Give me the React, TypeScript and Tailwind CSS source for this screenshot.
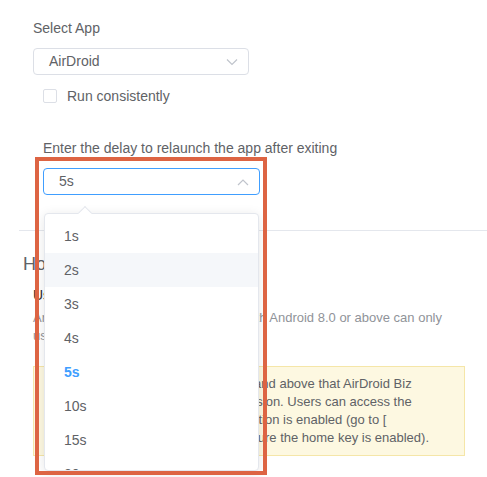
import React from "react";

const font = { fontFamily: '"Liberation Sans", Arial, sans-serif' };

const options = ["1s", "2s", "3s", "4s", "5s", "10s", "15s", "20s", "30s"];

function Chevron({ up }: { up?: boolean }) {
  return (
    <svg width="12" height="8" viewBox="0 0 12 8" className="text-[#c0c4cc]">
      <path
        d={up ? "M1 7 L6 2 L11 7" : "M1 1.5 L6 6.5 L11 1.5"}
        fill="none"
        stroke="currentColor"
        strokeWidth="1.2"
      />
    </svg>
  );
}

export default function App() {
  return (
    <div className="relative w-[487px] h-[477px] overflow-hidden bg-white text-[#606266]" style={font}>
      {/* form */}
      <div className="pl-[33px] pt-[19px]">
        <div className="text-[14px] leading-[18px]">Select App</div>
        <div className="mt-[11px] w-[216px] h-[27px] border border-[#dcdfe6] rounded-[4px] flex items-center justify-between pl-[15px] pr-[10px]">
          <span className="text-[14px]">AirDroid</span>
          <Chevron />
        </div>
        <div className="mt-[14px] ml-[10px] flex items-center gap-[10px]">
          <span className="w-[14px] h-[14px] border border-[#dcdfe6] rounded-[2px] bg-white" />
          <span className="text-[14px] leading-[14px]">Run consistently</span>
        </div>
      </div>

      <div className="pl-[43px] mt-[36px]">
        <div className="text-[14px] leading-[18px]">Enter the delay to relaunch the app after exiting</div>
        <div className="relative mt-[11px] w-[217px]">
          <div className="h-[27px] border border-[#409eff] rounded-[4px] flex items-center justify-between pl-[15px] pr-[10px]">
            <span className="text-[14px]">5s</span>
            <Chevron up />
          </div>

          {/* dropdown popover */}
          <div className="absolute z-20 left-[1px] top-[45px] w-[215px] h-[258px] bg-white border border-[#e4e7ed] rounded-[4px] shadow-[0_2px_12px_0_rgba(0,0,0,0.1)]">
            <span className="absolute -top-[6px] left-[35px] w-[10px] h-[10px] bg-white border-l border-t border-[#e4e7ed] rotate-45" />
            <div className="relative h-full overflow-hidden pt-[5px]">
              {options.map((o) => (
                <div
                  key={o}
                  className={
                    "h-[34px] flex items-center pl-[19px] text-[14px] " +
                    (o === "2s" ? "bg-[#f5f7fa] " : "") +
                    (o === "5s" ? "text-[#409eff] font-bold" : "text-[#606266]")
                  }
                >
                  {o}
                </div>
              ))}
            </div>
          </div>
        </div>
      </div>

      <div className="ml-[19px] mt-[35px] border-t border-[#e4e7ed]" />

      <div className="pl-[23px] pt-[22px] text-[18px] leading-[22px] text-[#606266]">Home Key</div>
      <div className="pl-[33px] pt-[11px] text-[14px] leading-[18px] text-[#303133]">Use home key</div>
      <div className="pl-[33px] pr-[30px] pt-[5px] text-[13px] leading-[18px] text-[#909399]">
        Any devices running on AirDroid Biz with Android 8.0 or above can only use the home key via the launcher.
      </div>

      <div className="ml-[33px] mt-[21px] w-[432px] h-[90px] bg-[#fdf8e1] border border-[#f5e6a8] pl-[12px] pr-[10px] pt-[8px] text-[13px] leading-[18px] text-[#606266] whitespace-nowrap">
        Notes: For devices with Android 9.0 and above that AirDroid Biz
        <br />
        requires the floating windows permission. Users can access the
        <br />
        home screen only if the home key option is enabled (go to [
        <br />
        Launcher Settings], and then make sure the home key is enabled).
      </div>

      {/* annotation box */}
      <div className="absolute z-30 left-[35px] top-[157px] w-[232px] h-[318px] border-[4px] border-[#dd6443] pointer-events-none" />
    </div>
  );
}
